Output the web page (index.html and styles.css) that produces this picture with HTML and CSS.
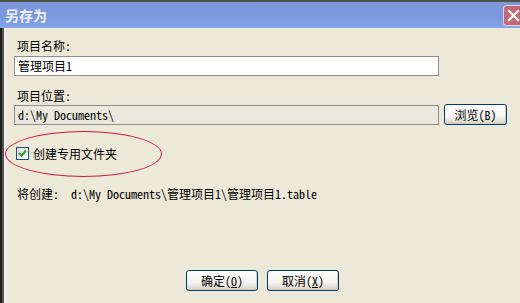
FILE: index.html
```html
<!DOCTYPE html>
<html lang="zh-CN">
<head>
<meta charset="utf-8">
<title>另存为</title>
<link rel="stylesheet" href="styles.css">
</head>
<body>
<div class="window">
  <div class="titlebar">
    <span class="title">另存为</span>
    <span class="close">
      <svg width="13" height="13" viewBox="0 0 13 13"><path d="M2 2 L11 11 M11 2 L2 11" stroke="#fff" stroke-width="2.2" stroke-linecap="square"/></svg>
    </span>
  </div>
  <div class="content">
    <div class="label label-first">项目名称:</div>
    <div class="field">管理项目1</div>
    <div class="label label-second">项目位置:</div>
    <div class="row">
      <div class="field field-disabled">d:\My Documents\</div>
      <button class="btn btn-browse">浏览(B)</button>
    </div>
    <div class="check-row">
      <span class="checkbox">
        <svg width="11" height="11" viewBox="0 0 11 11"><path d="M2 5 L4.5 7.8 L9 2.5" fill="none" stroke="#21a121" stroke-width="2"/></svg>
      </span>
      <span class="check-label">创建专用文件夹</span>
    </div>
    <div class="path">将创建:  d:\My Documents\管理项目1\管理项目1.table</div>
    <div class="actions">
      <button class="btn btn-action">确定(<u>O</u>)</button>
      <button class="btn btn-action">取消(<u>X</u>)</button>
    </div>
    <div class="annotation"></div>
  </div>
</div>
</body>
</html>
```
FILE: styles.css
```css
html, body {
  margin: 0;
  padding: 0;
  background: #ece9d8;
}
.window {
  width: 520px;
  height: 303px;
  overflow: hidden;
  display: flex;
  flex-direction: column;
  font-family: "Noto Sans Mono CJK SC", "Noto Sans CJK SC", monospace;
  font-size: 12px;
  color: #000;
}
.titlebar {
  height: 26px;
  flex: none;
  display: flex;
  align-items: center;
  justify-content: space-between;
  border-top: 2px solid #4b5447;
  background: linear-gradient(#7d97db, #7a96df 55%, #86a7ea);
}
.title {
  padding-left: 5px;
  color: #eef2fb;
  font-weight: bold;
  font-size: 14px;
  font-family: "Noto Sans CJK SC", sans-serif;
  line-height: 16px;
}
.close {
  width: 19px;
  height: 19px;
  margin-right: -4px;
  display: flex;
  align-items: center;
  justify-content: center;
  background: #c26a7a;
  border: 1px solid #e8d0da;
  border-radius: 3px;
}
.content {
  position: relative;
  flex: 1;
  display: flex;
  flex-direction: column;
  align-items: flex-start;
  padding: 11px 0 0 14px;
  border-left: 2px solid #1e1e1e;
  box-shadow: inset 2px 0 0 #55544e, inset 4px 0 0 #f3f1e8;
}
.label {
  line-height: 14px;
  padding-left: 1px;
}
.label-second {
  margin-top: 13px;
}
.field {
  margin-top: 3px;
  width: 420px;
  height: 18px;
  line-height: 18px;
  padding-left: 3px;
  background: #fff;
  border: 1px solid #8e8e8e;
  margin-left: -2px;
}
.row {
  display: flex;
  align-items: flex-start;
  gap: 5px;
  margin-top: 1px;
}
.row .field {
  margin-top: 1px;
}
.field-disabled {
  background: #ebe9dd;
}
.btn {
  font: inherit;
  color: #000;
  padding: 0;
  border: 1px solid #003c74;
  border-radius: 3px;
  background: linear-gradient(#ffffff, #f4f3ee 60%, #d6d0c5);
  box-shadow: inset -1px -1px 0 #d2cdc0;
  line-height: 19px;
}
.btn-browse {
  width: 63px;
  height: 21px;
}
.check-row {
  display: flex;
  align-items: center;
  gap: 4px;
  margin-top: 21px;
  height: 14px;
}
.checkbox {
  width: 11px;
  height: 11px;
  border: 1px solid #1c5180;
  background: linear-gradient(135deg, #dcdcd7, #ffffff);
  display: flex;
  align-items: center;
  justify-content: center;
}
.path {
  margin-top: 27px;
  line-height: 14px;
  padding-left: 1px;
  white-space: pre;
}
.actions {
  display: flex;
  gap: 9px;
  margin-top: 69px;
  margin-left: 170px;
}
.btn-action {
  width: 72px;
  height: 21px;
}
.annotation {
  position: absolute;
  left: 3px;
  top: 103px;
  width: 155px;
  height: 44px;
  border: 1px solid #d21c3c;
  border-radius: 50%;
  pointer-events: none;
}
```
